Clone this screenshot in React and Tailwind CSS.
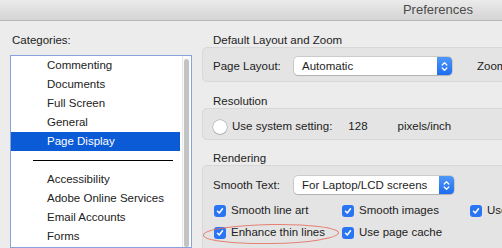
import React from "react";

const Stepper = () => (
  <div className="w-[15px] h-full rounded-r-[4px] bg-gradient-to-b from-[#4f97f8] to-[#1d6cf0] flex items-center justify-center">
    <svg width="7" height="11" viewBox="0 0 7 11" fill="none" stroke="white" strokeWidth="1.3" strokeLinecap="round" strokeLinejoin="round">
      <path d="M1.2 4 L3.5 1.6 L5.8 4" />
      <path d="M1.2 7 L3.5 9.4 L5.8 7" />
    </svg>
  </div>
);

const Select = ({ text, w }) => (
  <div className={`flex h-[18px] ${w} rounded-[4px] bg-white shadow-[0_0_0_0.5px_rgba(0,0,0,0.22),0_1px_1px_rgba(0,0,0,0.12)]`}>
    <div className="flex-1 pl-[8px] leading-[18px] text-[#1e1e1e]">{text}</div>
    <Stepper />
  </div>
);

const Check = ({ label }) => (
  <div className="flex items-center h-[22px] gap-[5px] whitespace-nowrap">
    <span className="w-[12px] h-[12px] shrink-0 rounded-[3px] bg-[#2a75f3] flex items-center justify-center">
      <svg width="8" height="8" viewBox="0 0 8 8">
        <path d="M1.5 4.2 L3.3 6 L6.5 1.8" stroke="white" strokeWidth="1.5" fill="none" strokeLinecap="round" strokeLinejoin="round" />
      </svg>
    </span>
    <span>{label}</span>
  </div>
);

export default function App() {
  const items1 = ["Commenting", "Documents", "Full Screen", "General"];
  const items2 = ["Accessibility", "Adobe Online Services", "Email Accounts", "Forms"];
  return (
    <div
      className="w-[502px] h-[248px] overflow-hidden bg-[#ececec] text-[11.5px] text-[#222]"
      style={{ fontFamily: '"Liberation Sans", Arial, sans-serif' }}
    >
      {/* Title bar */}
      <div className="h-[21px] bg-gradient-to-b from-[#ebebeb] to-[#d4d4d4] border-b border-[#b8b8b8] flex items-center justify-end pr-[29px]">
        <span className="text-[13px] text-[#4b4b4b]">Preferences</span>
      </div>

      <div className="flex h-[227px]">
        {/* Left column */}
        <div className="w-[202px] shrink-0 pl-[10px] pt-[12px] flex flex-col">
          <div className="h-[14px] leading-[14px] pl-[2px]">Categories:</div>
          <div className="mt-[8px] w-[182px] flex-1 border border-[#88a3d9] bg-white flex">
            <div className="w-[169px]">
              {items1.map((t) => (
                <div key={t} className="h-[19px] leading-[19px] pl-[36px]">{t}</div>
              ))}
              <div className="h-[19px] leading-[19px] pl-[36px] bg-[#0b5ad6] text-white">Page Display</div>
              <div className="h-[19px] flex items-center pl-[22px] pr-[7px]">
                <div className="h-px w-full bg-black" />
              </div>
              {items2.map((t) => (
                <div key={t} className="h-[19px] leading-[19px] pl-[36px]">{t}</div>
              ))}
            </div>
            <div className="w-[11px] flex">
              <div className="ml-[2px] w-[8px] border-l border-[#e6e6e6] bg-[#fafafa] pt-[3px] flex justify-center">
                <div className="w-[5px] h-full rounded-full bg-[#c3c3c3]" />
              </div>
            </div>
          </div>
        </div>

        {/* Right column */}
        <div className="w-[330px] shrink-0 pt-[12px] flex flex-col">
          <div className="h-[14px] leading-[14px] pl-[11px]">Default Layout and Zoom</div>
          <div className="h-[35px] rounded-[5px] border border-[#d8d8d8] bg-[#e4e4e4] pt-[9px] pl-[10px] flex items-start">
            <div className="w-[81px] leading-[18px]">Page Layout:</div>
            <Select text="Automatic" w="w-[158px]" />
            <div className="ml-[25px] leading-[18px]">Zoom</div>
          </div>

          <div className="h-[14px] leading-[14px] pl-[11px] mt-[12px]">Resolution</div>
          <div className="h-[32px] rounded-[5px] border border-[#d8d8d8] bg-[#e4e4e4] pt-[11px] pl-[10px] flex items-start">
            <div className="flex items-center h-[14px] whitespace-nowrap">
              <span className="w-[14px] h-[14px] rounded-full bg-white shadow-[0_0_0_0.5px_rgba(0,0,0,0.3),0_1px_1px_rgba(0,0,0,0.1)]" />
              <span className="ml-[5px]">Use system setting:</span>
              <span className="ml-[16px]">128</span>
              <span className="ml-[30px]">pixels/inch</span>
            </div>
          </div>

          <div className="h-[14px] leading-[14px] pl-[11px] mt-[11px]">Rendering</div>
          <div className="relative flex-1 rounded-t-[5px] border border-b-0 border-[#d8d8d8] bg-[#e4e4e4] pt-[10px] pl-[10px]">
            <div className="flex items-start">
              <div className="w-[81px] leading-[18px]">Smooth Text:</div>
              <Select text="For Laptop/LCD screens" w="w-[160px]" />
            </div>
            <div className="mt-[6px] pl-[1px] grid grid-cols-[128px_128px_128px]">
              <Check label="Smooth line art" />
              <Check label="Smooth images" />
              <Check label="Use local fonts" />
              <Check label="Enhance thin lines" />
              <Check label="Use page cache" />
            </div>
            <svg className="absolute left-[-1px] top-[57px]" width="140" height="22" viewBox="0 0 140 22" fill="none">
              <ellipse cx="69" cy="11" rx="67.5" ry="9.5" stroke="#e5705f" strokeOpacity="0.85" strokeWidth="1" transform="rotate(-1 69 11)" />
            </svg>
          </div>
        </div>
      </div>
    </div>
  );
}
